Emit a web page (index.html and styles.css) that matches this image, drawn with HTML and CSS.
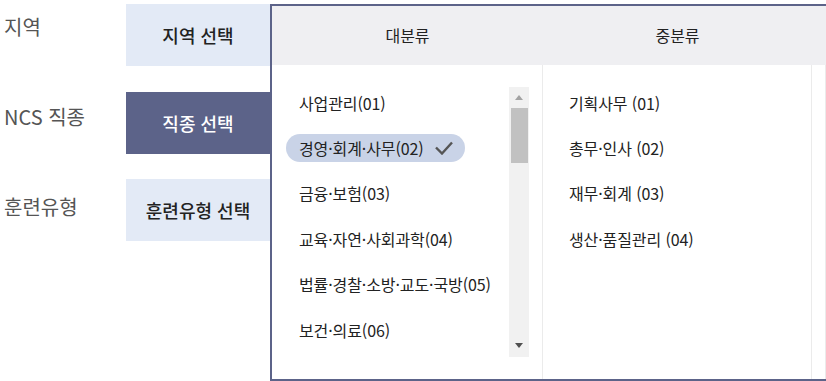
FILE: index.html
```html
<!DOCTYPE html>
<html lang="ko">
<head>
  <meta charset="UTF-8" />
  <meta name="viewport" content="width=device-width, initial-scale=1.0"/>
  <title>직종 선택</title>
  <link rel="stylesheet" href="styles.css">
</head>
<body>

  <div class="page">
    <div class="labels">
      <div class="label">지역</div>
      <div class="label">NCS 직종</div>
      <div class="label">훈련유형</div>
    </div>

    <div class="buttons">
      <div class="pick-btn">지역 선택</div>
      <div class="pick-btn active">직종 선택</div>
      <div class="pick-btn">훈련유형 선택</div>
    </div>

    <div class="panel">
      <div class="panel-head">
        <div class="head-cell">대분류</div>
        <div class="head-cell">중분류</div>
        <div class="head-cell"></div>
      </div>
      <div class="panel-body">
        <div class="col col-main">
          <ul class="list">
            <li><span class="item">사업관리(01)</span></li>
            <li><span class="item selected">경영·회계·사무(02)
              <svg class="check" width="18" height="14" viewBox="0 0 18 14"><polyline points="1,6.5 7,12.5 17,1.5" fill="none" stroke="#555" stroke-width="2.4"/></svg>
            </span></li>
            <li><span class="item">금융·보험(03)</span></li>
            <li><span class="item">교육·자연·사회과학(04)</span></li>
            <li><span class="item">법률·경찰·소방·교도·국방(05)</span></li>
            <li><span class="item">보건·의료(06)</span></li>
          </ul>
          <div class="scrollbar">
            <div class="arrow up"></div>
            <div class="thumb"></div>
            <div class="track-fill"></div>
            <div class="arrow down"></div>
          </div>
        </div>
        <div class="col col-sub">
          <ul class="list">
            <li><span class="item">기획사무 (01)</span></li>
            <li><span class="item">총무·인사 (02)</span></li>
            <li><span class="item">재무·회계 (03)</span></li>
            <li><span class="item">생산·품질관리 (04)</span></li>
          </ul>
        </div>
        <div class="col"></div>
      </div>
    </div>
  </div>

</body>
</html>
```

FILE: styles.css
```css
body {
  margin: 0;
  font-family: "Noto Sans CJK KR", "Noto Sans", sans-serif;
  background-color: white;
  color: #222;
  overflow: hidden;
}

.page {
  display: flex;
  padding-top: 4px;
  height: 377px;
}

.labels {
  width: 126px;
  display: flex;
  flex-direction: column;
  gap: 36px;
  margin-top: -4px;
}

.label {
  height: 54px;
  line-height: 54px;
  padding-left: 4px;
  font-size: 20px;
  color: #555;
}

.buttons {
  width: 144px;
  display: flex;
  flex-direction: column;
  gap: 25.5px;
}

.pick-btn {
  height: 62px;
  line-height: 62px;
  text-align: center;
  font-size: 18px;
  font-weight: 500;
  background-color: #e3eaf6;
  color: #222;
}

.pick-btn.active {
  background-color: #5c6389;
  color: white;
}

.panel {
  flex: 1;
  border: 2px solid #5c6389;
  border-right: none;
  display: flex;
  flex-direction: column;
  height: 373px;
}

.panel-head {
  display: grid;
  grid-template-columns: 271px 269px 1fr;
  height: 59px;
  background-color: #efeff2;
}

.head-cell {
  text-align: center;
  line-height: 59px;
  font-size: 16px;
}

.panel-body {
  flex: 1;
  display: grid;
  grid-template-columns: 271px 269px 1fr;
}

.col {
  border-right: 1px solid #ebebeb;
  overflow: hidden;
}

.col-main {
  display: flex;
}

.list {
  list-style: none;
  margin: 0;
  padding: 15px 0 0 14px;
  flex: 1;
  font-size: 16px;
  letter-spacing: -0.1px;
}

.col-sub .list {
  padding-left: 13px;
}

.list li {
  height: 45.4px;
  display: flex;
  align-items: center;
}

.item {
  display: inline-flex;
  align-items: center;
  height: 28px;
  padding: 0 13px;
  border-radius: 14px;
  white-space: nowrap;
}

.item.selected {
  background-color: #c9d3e7;
  padding-right: 12px;
}

.check {
  margin-left: 11px;
}

.scrollbar {
  width: 20px;
  margin: 22px 13px 22px 0;
  background-color: #f1f1f1;
  display: flex;
  flex-direction: column;
  align-items: center;
}

.arrow {
  width: 0;
  height: 0;
  border-left: 4.5px solid transparent;
  border-right: 4.5px solid transparent;
}

.arrow.up {
  border-bottom: 5px solid #a3a3a3;
  margin: 8px 0 8px;
}

.arrow.down {
  border-top: 5px solid #505050;
  margin: 0 0 9px;
}

.thumb {
  width: 17px;
  height: 55px;
  background-color: #c1c1c1;
}

.track-fill {
  flex: 1;
}
```
